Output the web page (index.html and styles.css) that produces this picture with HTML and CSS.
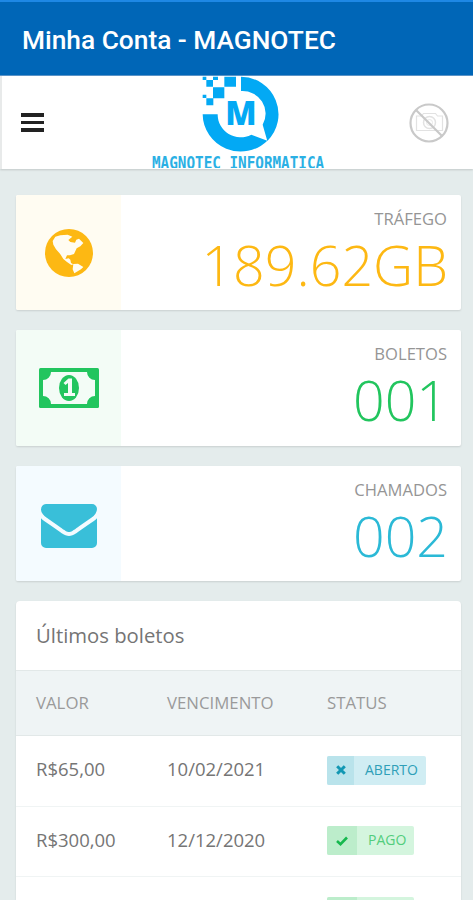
FILE: index.html
```html
<!DOCTYPE html>
<html lang="pt-BR">
<head>
    <meta charset="UTF-8">
    <meta name="viewport" content="width=device-width, initial-scale=1.0">
    <title>Minha Conta - MAGNOTEC</title>
    <link rel="stylesheet" href="styles.css">
</head>
<body>
    <div class="appbar">Minha Conta - MAGNOTEC</div>

    <header class="navbar">
        <div class="menu">
            <span></span>
            <span></span>
            <span></span>
        </div>
        <div class="logo">
            <svg class="logo-mark" width="78" height="77" viewBox="0 0 234 231">
                <g fill="#03a9f4">
                    <path d="M117 2A114 113 0 0 1 196 195L182 146A69 68 0 0 0 117 45Z"/>
                    <path d="M2 115H47A69 68 0 0 0 148 176L196 194A114 113 0 0 1 2 115Z"/>
                    <path d="M67 2h35v30H67zM33 34h34v33H33zM13 12h20v20H13zM33 2h15v10H33zM2 2h11v10H2zM2 56h11v10H2zM13 67h21v21H13z"/>
                </g>
                <text class="logo-letter" x="117" y="147" text-anchor="middle" textLength="94" lengthAdjust="spacingAndGlyphs">M</text>
            </svg>
            <div class="logo-name">MAGNOTEC INFORMATICA</div>
        </div>
        <svg class="avatar" width="40" height="40" viewBox="0 0 40 40" fill="none">
            <path d="M7.5 13h5l2-2.500h12l2 2.500h5V27.500h-26z" stroke="#e2e2e2" stroke-width="1.200"/>
            <circle cx="20.500" cy="19.500" r="6" stroke="#e2e2e2" stroke-width="1.500"/>
            <circle cx="20.500" cy="19.500" r="3" stroke="#e8e8e8"/>
            <circle cx="20" cy="20" r="18.500" stroke="#c9c9c9" stroke-width="2.200"/>
            <path d="M7 7l26.500 26.500" stroke="#c9c9c9" stroke-width="2.200"/>
        </svg>
    </header>

    <main class="content">
        <div class="card yellow">
            <div class="card-icon">
                <svg width="48" height="48" viewBox="0 0 144 144">
                    <circle cx="72" cy="72" r="72" fill="#fdb813"/>
                    <path fill="#fffcf2" d="M23 36l8-13 15-4 22-2 14 6-12 10 6 6 14 2 4-9 8-3 13 13-9 10-11 6-8 17-12 4-9 0-5 11 10-2 5 4 2 10 7 4-6 2-13-9-11-9-10-16-12-13-8-14zM85 105l14-1 16 10-7 7-20 12-5-12z"/>
                </svg>
            </div>
            <div class="card-info">
                <div class="card-label">TRÁFEGO</div>
                <div class="card-value">189.62GB</div>
            </div>
        </div>

        <div class="card green">
            <div class="card-icon">
                <svg width="60" height="40" viewBox="0 0 60 40">
                    <rect width="60" height="40" rx="1.500" fill="#22c55e"/>
                    <path fill="#f3fcf6" d="M12 4H48A8 8 0 0 0 56 12V28A8 8 0 0 0 48 36H12A8 8 0 0 0 4 28V12A8 8 0 0 0 12 4Z"/>
                    <ellipse cx="30" cy="20" rx="10" ry="13" fill="#22c55e"/>
                    <path fill="#f3fcf6" d="M24.500 15l5-4.500h3.500V25h3v3H25v-3h4V15l-2.500 2z"/>
                </svg>
            </div>
            <div class="card-info">
                <div class="card-label">BOLETOS</div>
                <div class="card-value">001</div>
            </div>
        </div>

        <div class="card blue">
            <div class="card-icon">
                <svg width="56" height="44" viewBox="0 0 1792 1408" fill="#39bfd9">
                    <path d="M1792 454v794q0 66-47 113t-113 47H160q-66 0-113-47T0 1248V454q44 49 101 87 362 246 497 345 57 42 92.500 65.500t94.500 48 110 24.500h2q51 0 110-24.500t94.500-48 92.500-65.500q170-123 498-345 57-39 100-87zM1792 160q0 79-49 151t-122 123q-376 261-468 325-10 7-42.500 30.500t-54 38-52 32.500-57.500 27-50 9h-2q-23 0-50-9t-57.500-27-52-32.500-54-38T639 759q-91-64-262-182.500T172 434q-62-42-117-115.500T0 182q0-78 41.500-130T160 0h1472q65 0 112.500 47t47.500 113z"/>
                </svg>
            </div>
            <div class="card-info">
                <div class="card-label">CHAMADOS</div>
                <div class="card-value">002</div>
            </div>
        </div>

        <section class="panel">
            <h2>Últimos boletos</h2>
            <div class="row head">
                <div>VALOR</div>
                <div>VENCIMENTO</div>
                <div>STATUS</div>
            </div>
            <div class="row">
                <div>R$65,00</div>
                <div>10/02/2021</div>
                <div class="status">
                    <span class="badge open">
                        <i><svg width="10" height="10" viewBox="0 0 10 10"><path d="M1.200 1.200l7.600 7.600M8.800 1.200L1.200 8.800" stroke="#1297b3" stroke-width="3"/></svg></i>
                        <b>ABERTO</b>
                    </span>
                </div>
            </div>
            <div class="row">
                <div>R$300,00</div>
                <div>12/12/2020</div>
                <div class="status">
                    <span class="badge paid">
                        <i><svg width="12" height="10" viewBox="0 0 12 10"><path d="M1 5l3.500 3.200L11 1.500" fill="none" stroke="#16b84e" stroke-width="2.600"/></svg></i>
                        <b>PAGO</b>
                    </span>
                </div>
            </div>
            <div class="row next">
                <div></div>
                <div></div>
                <div class="status">
                    <span class="badge paid"><i></i><b></b></span>
                </div>
            </div>
        </section>
    </main>
</body>
</html>
```
FILE: styles.css
```css
* {
    box-sizing: border-box;
}

body {
    display: flex;
    flex-direction: column;
    margin: 0;
    height: 100vh;
    overflow: hidden;
    background: #e4ecec;
    color: #757575;
    font-family: "Open Sans", "Noto Sans", sans-serif;
}

.appbar {
    flex: none;
    height: 76px;
    padding: 3px 22px 0;
    border-top: 2px solid #1e88e5;
    border-bottom: 1px solid #5b95c9;
    background: #0066b7;
    color: #fff;
    font: 500 26.300px/70px Roboto, sans-serif;
}

.navbar {
    display: flex;
    flex: none;
    height: 93px;
    padding: 0 24px 0 19px;
    border-left: 2px solid #e8eaea;
    background: #fff;
    box-shadow: 0 1px 2px rgba(0, 0, 0, 0.15);
}

.menu {
    display: flex;
    flex-direction: column;
    gap: 4px;
    width: 23px;
    padding-top: 37px;
}

.menu span {
    height: 3.500px;
    background: #222;
}

.logo {
    width: 176px;
    height: 92px;
    margin-left: 107px;
    overflow: hidden;
}

.logo-mark {
    display: block;
    margin-left: 51px;
}

.logo-letter {
    fill: #03a9f4;
    font: 800 98px "Open Sans", sans-serif;
}

.logo-name {
    margin-left: 1px;
    color: #2bb0e4;
    font: bold 14.300px/16px "DejaVu Sans Mono", monospace;
    transform: scaleY(1.250);
    transform-origin: top;
    white-space: nowrap;
}

.avatar {
    margin: 27px 0 0 auto;
}

.content {
    display: flex;
    flex: 1;
    flex-direction: column;
    min-height: 0;
    padding: 25.500px 12px 0 16px;
}

.card {
    display: flex;
    flex: none;
    height: 115.500px;
    margin-bottom: 20px;
    border-radius: 2px;
    background: #fff;
    box-shadow: 0 1px 2px rgba(0, 0, 0, 0.12);
    overflow: hidden;
}

.card-icon {
    display: flex;
    align-items: center;
    justify-content: center;
    width: 105px;
    padding-top: 1px;
}

.blue .card-icon {
    padding-top: 6px;
}

.card-info {
    flex: 1;
    padding: 13px 14px 0 0;
    text-align: right;
}

.card-label {
    color: #959595;
    font-size: 16.600px;
    line-height: 22px;
}

.card-value {
    margin-right: -1px;
    font-size: 55.500px;
    font-weight: 300;
    line-height: 70px;
}

.yellow .card-icon { background: #fffcf2; }
.green .card-icon { background: #f3fcf6; }
.blue .card-icon { background: #f4fbff; }

.yellow .card-value { color: #fdb813; }
.green .card-value { color: #22c55e; }
.blue .card-value { color: #2bb9d6; }

.panel {
    display: flex;
    flex: 1;
    flex-direction: column;
    min-height: 0;
    border-radius: 4px 4px 0 0;
    background: #fff;
    box-shadow: 0 1px 2px rgba(0, 0, 0, 0.12);
    overflow: hidden;
}

.panel h2 {
    flex: none;
    height: 69px;
    margin: 0;
    padding-left: 20px;
    font-size: 20.300px;
    font-weight: 400;
    line-height: 69px;
}

.row {
    display: grid;
    flex: none;
    grid-template-columns: 131px 160px 1fr;
    align-items: center;
    height: 70.500px;
    padding: 0 0 4px 20px;
    border-bottom: 1px solid #f0f4f4;
    font-size: 18.500px;
}

.head {
    height: 66px;
    padding-bottom: 2px;
    border-top: 1px solid #e2e8e8;
    border-bottom: 1px solid #e2e8e8;
    background: #eff4f5;
    color: #9a9a9a;
    font-size: 16.800px;
}

.next {
    flex: 1;
    align-items: start;
    height: auto;
    min-height: 0;
    padding-top: 17px;
    border-bottom: 0;
    overflow: hidden;
}

.status {
    padding-top: 3px;
}

.badge {
    display: flex;
    width: max-content;
    height: 29px;
    border-radius: 2px;
    overflow: hidden;
}

.badge i {
    display: flex;
    align-items: center;
    justify-content: center;
    width: 27px;
}

.badge b {
    padding: 0 8px 0 11px;
    font-size: 14px;
    font-weight: 400;
    line-height: 28px;
}

.open { background: #d0edf3; color: #2f9fb8; }
.open i { background: #b9e3eb; }
.paid { background: #d4f5de; color: #52cd7c; }
.paid i { width: 30px; background: #bcedcb; }
.next b { width: 57px; }
```
